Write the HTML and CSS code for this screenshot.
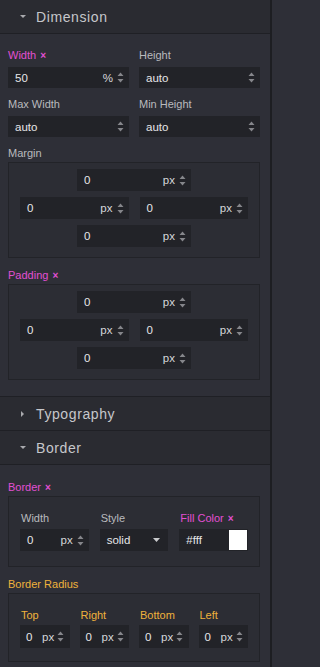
FILE: index.html
```html
<!DOCTYPE html>
<html>
<head>
<meta charset="utf-8">
<link rel="stylesheet" href="styles.css">
</head>
<body>
<div class="panel">
  <div class="sec-head"><span class="caret down"></span><span class="sec-title">Dimension</span></div>
  <div class="sec-body">
    <div class="row2">
      <div class="field">
        <div class="lbl pink">Width <span class="x">×</span></div>
        <div class="inp"><span class="val">50</span><span class="unit">%</span><svg class="spin" viewBox="0 0 7 11"><path d="M3.5 0.5 L6.5 4 L0.5 4 Z M3.5 10.5 L6.5 7 L0.5 7 Z"/></svg></div>
      </div>
      <div class="field">
        <div class="lbl">Height</div>
        <div class="inp"><span class="val">auto</span><svg class="spin" viewBox="0 0 7 11"><path d="M3.5 0.5 L6.5 4 L0.5 4 Z M3.5 10.5 L6.5 7 L0.5 7 Z"/></svg></div>
      </div>
    </div>
    <div class="row2 mt">
      <div class="field">
        <div class="lbl">Max Width</div>
        <div class="inp"><span class="val">auto</span><svg class="spin" viewBox="0 0 7 11"><path d="M3.5 0.5 L6.5 4 L0.5 4 Z M3.5 10.5 L6.5 7 L0.5 7 Z"/></svg></div>
      </div>
      <div class="field">
        <div class="lbl">Min Height</div>
        <div class="inp"><span class="val">auto</span><svg class="spin" viewBox="0 0 7 11"><path d="M3.5 0.5 L6.5 4 L0.5 4 Z M3.5 10.5 L6.5 7 L0.5 7 Z"/></svg></div>
      </div>
    </div>
    <div class="lbl mt sub">Margin</div>
    <div class="box box-sides">
      <div class="inp side-top"><span class="val">0</span><span class="unit">px</span><svg class="spin" viewBox="0 0 7 11"><path d="M3.5 0.5 L6.5 4 L0.5 4 Z M3.5 10.5 L6.5 7 L0.5 7 Z"/></svg></div>
      <div class="side-mid">
        <div class="inp"><span class="val">0</span><span class="unit">px</span><svg class="spin" viewBox="0 0 7 11"><path d="M3.5 0.5 L6.5 4 L0.5 4 Z M3.5 10.5 L6.5 7 L0.5 7 Z"/></svg></div>
        <div class="inp"><span class="val">0</span><span class="unit">px</span><svg class="spin" viewBox="0 0 7 11"><path d="M3.5 0.5 L6.5 4 L0.5 4 Z M3.5 10.5 L6.5 7 L0.5 7 Z"/></svg></div>
      </div>
      <div class="inp side-top"><span class="val">0</span><span class="unit">px</span><svg class="spin" viewBox="0 0 7 11"><path d="M3.5 0.5 L6.5 4 L0.5 4 Z M3.5 10.5 L6.5 7 L0.5 7 Z"/></svg></div>
    </div>
    <div class="lbl pink mt2 sub">Padding <span class="x">×</span></div>
    <div class="box box-sides">
      <div class="inp side-top"><span class="val">0</span><span class="unit">px</span><svg class="spin" viewBox="0 0 7 11"><path d="M3.5 0.5 L6.5 4 L0.5 4 Z M3.5 10.5 L6.5 7 L0.5 7 Z"/></svg></div>
      <div class="side-mid">
        <div class="inp"><span class="val">0</span><span class="unit">px</span><svg class="spin" viewBox="0 0 7 11"><path d="M3.5 0.5 L6.5 4 L0.5 4 Z M3.5 10.5 L6.5 7 L0.5 7 Z"/></svg></div>
        <div class="inp"><span class="val">0</span><span class="unit">px</span><svg class="spin" viewBox="0 0 7 11"><path d="M3.5 0.5 L6.5 4 L0.5 4 Z M3.5 10.5 L6.5 7 L0.5 7 Z"/></svg></div>
      </div>
      <div class="inp side-top"><span class="val">0</span><span class="unit">px</span><svg class="spin" viewBox="0 0 7 11"><path d="M3.5 0.5 L6.5 4 L0.5 4 Z M3.5 10.5 L6.5 7 L0.5 7 Z"/></svg></div>
    </div>
  </div>
  <div class="sec-head bt"><span class="caret right"></span><span class="sec-title">Typography</span></div>
  <div class="sec-head"><span class="caret down"></span><span class="sec-title">Border</span></div>
  <div class="sec-body sb2">
    <div class="lbl pink sub">Border <span class="x">×</span></div>
    <div class="box grid-box">
      <div class="grid3">
        <div class="field">
          <div class="lbl">Width</div>
          <div class="inp"><span class="val">0</span><span class="unit">px</span><svg class="spin" viewBox="0 0 7 11"><path d="M3.5 0.5 L6.5 4 L0.5 4 Z M3.5 10.5 L6.5 7 L0.5 7 Z"/></svg></div>
        </div>
        <div class="field">
          <div class="lbl">Style</div>
          <div class="inp"><span class="val">solid</span><svg class="drop" viewBox="0 0 7 4"><path d="M0 0 L7 0 L3.5 4 Z"/></svg></div>
        </div>
        <div class="field">
          <div class="lbl pink">Fill Color <span class="x">×</span></div>
          <div class="inp color"><span class="val">#fff</span><span class="swatch"></span></div>
        </div>
      </div>
    </div>
    <div class="lbl orange mt3 sub">Border Radius</div>
    <div class="box grid-box gb2">
      <div class="grid4">
        <div class="field">
          <div class="lbl orange">Top</div>
          <div class="inp sm"><span class="val">0</span><span class="unit">px</span><svg class="spin" viewBox="0 0 7 11"><path d="M3.5 0.5 L6.5 4 L0.5 4 Z M3.5 10.5 L6.5 7 L0.5 7 Z"/></svg></div>
        </div>
        <div class="field">
          <div class="lbl orange">Right</div>
          <div class="inp sm"><span class="val">0</span><span class="unit">px</span><svg class="spin" viewBox="0 0 7 11"><path d="M3.5 0.5 L6.5 4 L0.5 4 Z M3.5 10.5 L6.5 7 L0.5 7 Z"/></svg></div>
        </div>
        <div class="field">
          <div class="lbl orange">Bottom</div>
          <div class="inp sm"><span class="val">0</span><span class="unit">px</span><svg class="spin" viewBox="0 0 7 11"><path d="M3.5 0.5 L6.5 4 L0.5 4 Z M3.5 10.5 L6.5 7 L0.5 7 Z"/></svg></div>
        </div>
        <div class="field">
          <div class="lbl orange">Left</div>
          <div class="inp sm"><span class="val">0</span><span class="unit">px</span><svg class="spin" viewBox="0 0 7 11"><path d="M3.5 0.5 L6.5 4 L0.5 4 Z M3.5 10.5 L6.5 7 L0.5 7 Z"/></svg></div>
        </div>
      </div>
    </div>
  </div>
</div>
</body>
</html>
```
FILE: styles.css
```css
* { box-sizing: border-box; }
html, body { margin: 0; padding: 0; background: #2e2f37; }
body {
  width: 272px;
  height: 667px;
  overflow: hidden;
  font-family: "Liberation Sans", Arial, sans-serif;
  font-size: 11px;
  color: #b9babe;
}
.panel {
  width: 272px;
  min-height: 667px;
  background: #2e2f37;
  border-right: 2px solid #1d1e22;
}
.sec-head {
  height: 34px;
  background: #2a2b31;
  border-bottom: 1px solid #1f2025;
  display: flex;
  align-items: center;
  padding-left: 20px;
}
.sec-head.bt { border-top: 1px solid #1f2025; height: 35px; }
.sec-title {
  font-size: 14px;
  letter-spacing: 0.6px;
  color: #c6c7cb;
  margin-left: 10px;
}
.caret { width: 6px; height: 6px; display: inline-block; position: relative; }
.caret.down::before {
  content: "";
  position: absolute; left: 0; top: 1px;
  border-left: 3px solid transparent;
  border-right: 3px solid transparent;
  border-top: 3px solid #a9aaae;
}
.caret.right::before {
  content: "";
  position: absolute; left: 1px; top: 0;
  border-top: 3px solid transparent;
  border-bottom: 3px solid transparent;
  border-left: 3px solid #a9aaae;
}
.sec-body { padding: 14px 10px 16px 8px; }
.sb2 { padding-top: 15px; padding-bottom: 5px; }
.row2 { display: grid; grid-template-columns: 1fr 1fr; column-gap: 10px; }
.mt { margin-top: 9px; }
.mt2 { margin-top: 10px; }
.mt3 { margin-top: 10px; }
.field { display: flex; flex-direction: column; min-width: 0; }
.lbl {
  height: 14px;
  line-height: 14px;
  margin-bottom: 5px;
  color: #b9babe;
  white-space: nowrap;
}
.lbl.sub { margin-bottom: 2px; }
.pink { color: #e24fd3; }
.orange { color: #efb23c; }
.x { font-size: 10px; font-weight: bold; margin-left: 1px; }
.inp {
  height: 21px;
  background: #222328;
  display: flex;
  align-items: center;
  padding: 0 5px 0 7px;
  color: #e6e6e8;
  font-size: 11.5px;
}
.val { flex: 1; min-width: 0; }
.unit { color: #d6d7da; margin-right: 4px; }
.spin { width: 7px; height: 11px; fill: #85868b; flex: none; }
.drop { width: 7px; height: 4px; fill: #c9cacd; flex: none; margin-right: 3px; }
.box {
  border: 1px solid #222328;
  background: #2c2d34;
  margin-top: 1px;
}
.box-sides {
  padding: 6px 11px 10px 11px;
  display: flex;
  flex-direction: column;
  gap: 6px;
}
.box-sides .inp { height: 22px; }
.side-top { width: 114px; align-self: center; }
.side-mid { display: grid; grid-template-columns: 1fr 1fr; column-gap: 11px; }
.grid-box { padding: 14px 11px 15px 11px; }
.gb2 { padding-top: 14px; padding-bottom: 13px; }
.grid3 { display: grid; grid-template-columns: 1fr 1fr 1fr; column-gap: 11px; }
.grid4 { display: grid; grid-template-columns: repeat(4, 1fr); column-gap: 10px; }
.grid-box .lbl { padding-left: 1px; margin-bottom: 4px; }
.grid-box .inp { height: 22px; }
.gb2 .lbl { margin-bottom: 3px; }
.inp.sm { padding: 0 4px 0 6px; height: 23px; }
.inp.sm .val { flex: none; width: 16px; }
.inp.sm .unit { margin-right: 3px; }
.color { padding-right: 1px; }
.swatch { width: 18px; height: 20px; background: #ffffff; flex: none; }
```
